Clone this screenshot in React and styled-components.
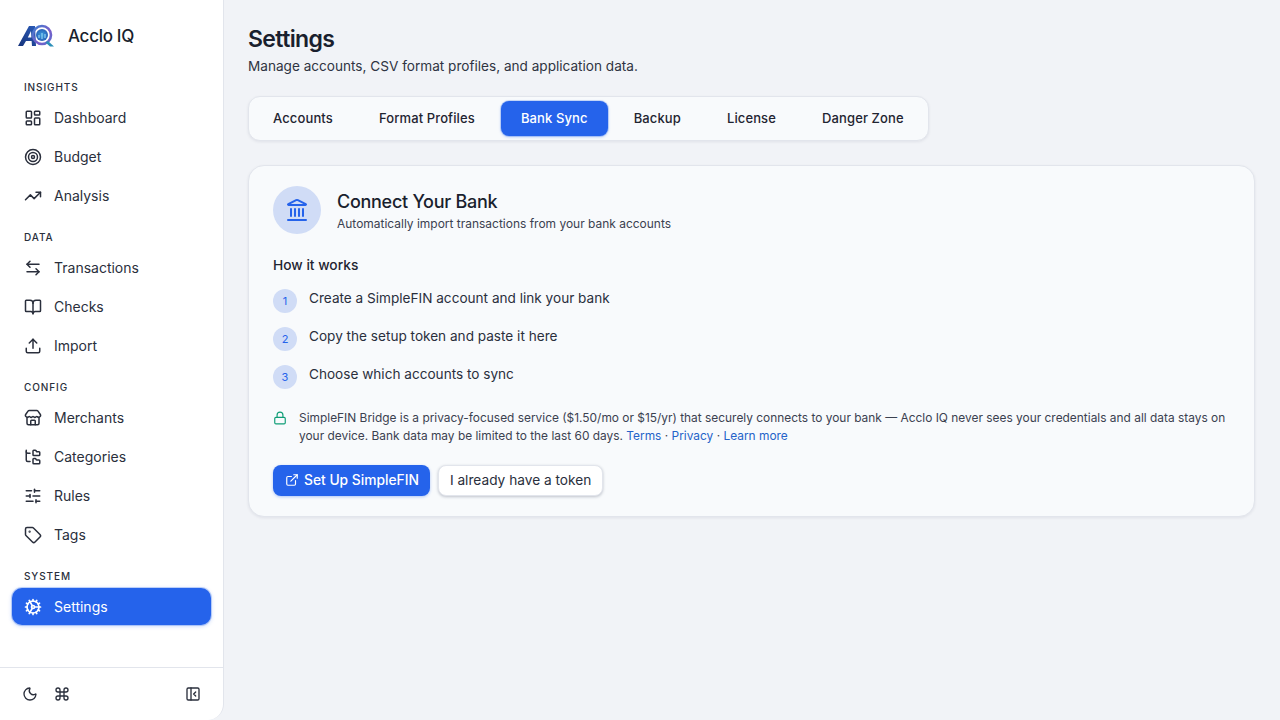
import React from 'react';
import styled, { createGlobalStyle } from 'styled-components';
import {
  LayoutDashboard, Target, TrendingUp, ArrowLeftRight, BookOpen, Upload, Store, FolderTree,
  SlidersHorizontal, Tag, Cog, Moon, Command, PanelLeftClose, Landmark, Lock, ExternalLink,
} from 'lucide-react';

const Global = createGlobalStyle`
  html, body { margin: 0; padding: 0; height: 100%; }
  body { font-family: Inter, "Liberation Sans", sans-serif; background: #f1f3f7; color: #1a1f2e; overflow: hidden; }
  * { box-sizing: border-box; }
`;

const Shell = styled.div`display: flex; width: 1280px; height: 720px; background: #f1f3f7;`;

const Sidebar = styled.aside`
  width: 224px; height: 720px; flex: none; background: #fff;
  border-right: 1px solid #e2e5ec; border-bottom-right-radius: 16px;
  display: flex; flex-direction: column;
`;
const Brand = styled.div`
  height: 72px; padding: 0 0 0 18px; display: flex; align-items: center; gap: 12px;
  font-size: 17px; font-weight: 500; letter-spacing: -0.3px; color: #1a1f2e;
`;
const Nav = styled.nav`flex: 1; padding: 0 12px 0 12px; display: flex; flex-direction: column;`;
const SectionLabel = styled.div`
  padding: 0 12px; height: 14px; line-height: 14px; margin-top: ${p => p.$first ? 8 : 14}px; margin-bottom: 5px;
  font-size: 10px; font-weight: 500; letter-spacing: 0.9px; color: #2a2f3c; text-transform: uppercase;
`;
const NavItem = styled.a`
  height: 37px; margin-bottom: 2px; padding: 0 12px; display: flex; align-items: center; gap: 12px;
  border-radius: 10px; font-size: 14px; font-weight: 400;
  color: ${p => p.$active ? '#fff' : '#2a2f3c'};
  background: ${p => p.$active ? '#2563eb' : 'transparent'};
  box-shadow: ${p => p.$active ? '0 0 0 1px rgba(37,99,235,.25), 0 1px 4px rgba(37,99,235,.3)' : 'none'};
  svg { flex: none; }
`;
const SideFooter = styled.div`
  height: 53px; border-top: 1px solid #e2e5ec; padding: 0 22px 0 22px; display: flex; align-items: center; gap: 16px;
  color: #2a2f3c;
`;
const Spacer = styled.div`flex: 1;`;

const Main = styled.main`flex: 1; padding: 24px 25px 0 24px; min-width: 0;`;
const Title = styled.h1`margin: 0; font-size: 23px; line-height: 31px; font-weight: 600; letter-spacing: -0.6px; color: #1a1f2e;`;
const Subtitle = styled.p`margin: 1px 0 0; font-size: 13.6px; line-height: 20px; color: #2f3442;`;
const Tabs = styled.div`
  margin-top: 20px; display: inline-flex; gap: 6px; padding: 4px; height: 45px; align-items: stretch;
  background: #f8fafc; border: 1px solid #e2e5ec; border-radius: 12px;
  box-shadow: 0 1px 3px rgba(20,30,60,.08);
`;
const Tab = styled.div`
  padding: 0 20px 1px; display: flex; align-items: center; border-radius: 8px;
  font-size: 13px; font-weight: 550; letter-spacing: 0.12px;
  color: ${p => p.$active ? '#fff' : '#1f2431'};
  background: ${p => p.$active ? '#2563eb' : 'transparent'};
  box-shadow: ${p => p.$active ? '0 0 0 1px rgba(37,99,235,.2), 0 1px 3px rgba(37,99,235,.35)' : 'none'};
`;
const Card = styled.section`
  margin-top: 24px; height: 352px; padding: 20px 24px; background: #f8fafc;
  border: 1px solid #e2e5ec; border-radius: 16px; box-shadow: 0 1px 3px rgba(20,30,60,.08);
`;
const CardHead = styled.div`display: flex; align-items: center; gap: 16px;`;
const HeadText = styled.div`padding-top: 3px;`;
const IconCircle = styled.div`
  width: 48px; height: 48px; border-radius: 50%; background: #d0dcf6; color: #2563eb;
  display: flex; align-items: center; justify-content: center;
`;
const CardTitle = styled.h2`margin: 0; font-size: 18px; line-height: 24px; font-weight: 550; letter-spacing: -0.28px; color: #1a1f2e;`;
const CardSub = styled.p`margin: 1px 0 0; font-size: 11.98px; line-height: 18px; color: #3b4150;`;
const Heading = styled.h3`margin: 20px 0 0; font-size: 13.75px; line-height: 22px; font-weight: 450; color: #1f2431;`;
const Steps = styled.ol`margin: 12px 0 0; padding: 0; list-style: none; display: flex; flex-direction: column; gap: 14px;`;
const Step = styled.li`display: flex; gap: 12px; font-size: 13.6px; line-height: 20px; color: #2a2f3c; height: 24px;`;
const Num = styled.span`
  width: 24px; height: 24px; margin-top: 1px; flex: none; border-radius: 50%; background: #d0dcf6; color: #2563eb;
  font-size: 11px; font-weight: 400; display: flex; align-items: center; justify-content: center;
`;
const Notice = styled.div`margin-top: 21px; display: flex; gap: 12px; font-size: 11.92px; line-height: 18px; color: #3b4150;`;
const LockWrap = styled.span`flex: none; color: #0f9d76; width: 14px; height: 18px; display: flex; align-items: center;`;
const Lnk = styled.a`color: #2563c9;`;
const Actions = styled.div`margin-top: 20px; display: flex; gap: 8px;`;
const Primary = styled.button`
  height: 31px; padding: 0 11px 1px 12px; display: flex; align-items: center; gap: 5px; border: none; border-radius: 8px;
  background: #2563eb; color: #fff; font: 450 13.8px Inter, sans-serif;
  box-shadow: 0 1px 3px rgba(37,99,235,.35);
`;
const Secondary = styled.button`
  height: 31px; padding: 0 11px 1px 11px; border: 1px solid #e2e5ec; border-radius: 8px; background: #fff;
  color: #2a2f3c; font: 400 13.7px Inter, sans-serif;
  box-shadow: 0 1px 3px rgba(20,30,60,.25);
`;

const Logo = () => (
  <svg width="38" height="24" viewBox="0 0 38 24">
    <defs>
      <linearGradient id="la" x1="0" y1="1" x2="1" y2="0">
        <stop offset="0" stopColor="#16337a" /><stop offset="1" stopColor="#2a5bb8" />
      </linearGradient>
      <linearGradient id="lr" x1="0" y1="0" x2="1" y2="1">
        <stop offset="0" stopColor="#3f7fd0" /><stop offset="0.6" stopColor="#7a5cc8" /><stop offset="1" stopColor="#5a6fd0" />
      </linearGradient>
      <radialGradient id="lq"><stop offset="0" stopColor="#3aa0e0" /><stop offset="1" stopColor="#2a63b8" /></radialGradient>
    </defs>
    <path d="M0 22 L11 2 H17 L18 22 H14 L13.6 17 H8 L5 22Z M9.8 13.5 H13.4 L13 7Z" fill="url(#la)" />
    <circle cx="24" cy="11" r="9" fill="none" stroke="url(#lr)" strokeWidth="2.6" />
    <circle cx="24" cy="11" r="6" fill="url(#lq)" />
    <path d="M30 17 L36 22.5 H32 L27.5 18.5Z" fill="#2b8fb8" />
    <path d="M21 14 v-3 M24 15 v-6 M27 14 v-4" stroke="#8fd0f0" strokeWidth="1.2" />
  </svg>
);

const sections = [
  ['Insights', [[LayoutDashboard, 'Dashboard'], [Target, 'Budget'], [TrendingUp, 'Analysis']]],
  ['Data', [[ArrowLeftRight, 'Transactions'], [BookOpen, 'Checks'], [Upload, 'Import']]],
  ['Config', [[Store, 'Merchants'], [FolderTree, 'Categories'], [SlidersHorizontal, 'Rules'], [Tag, 'Tags']]],
  ['System', [[Cog, 'Settings', true]]],
];
const tabs = ['Accounts', 'Format Profiles', 'Bank Sync', 'Backup', 'License', 'Danger Zone'];
const steps = ['Create a SimpleFIN account and link your bank', 'Copy the setup token and paste it here', 'Choose which accounts to sync'];

export default function App() {
  return (
    <Shell>
      <Global />
      <Sidebar>
        <Brand><Logo /><span>Acclo IQ</span></Brand>
        <Nav>
          {sections.map(([label, items], i) => (
            <React.Fragment key={label}>
              <SectionLabel $first={i === 0}>{label}</SectionLabel>
              {items.map(([Icon, name, active]) => (
                <NavItem key={name} $active={active}><Icon size={18} strokeWidth={active ? 2.25 : 2} />{name}</NavItem>
              ))}
            </React.Fragment>
          ))}
        </Nav>
        <SideFooter>
          <Moon size={16} strokeWidth={2} />
          <Command size={16} strokeWidth={2} />
          <Spacer />
          <PanelLeftClose size={16} strokeWidth={2} />
        </SideFooter>
      </Sidebar>
      <Main>
        <Title>Settings</Title>
        <Subtitle>Manage accounts, CSV format profiles, and application data.</Subtitle>
        <Tabs>
          {tabs.map(t => <Tab key={t} $active={t === 'Bank Sync'}>{t}</Tab>)}
        </Tabs>
        <Card>
          <CardHead>
            <IconCircle><Landmark size={24} strokeWidth={2} /></IconCircle>
            <HeadText>
              <CardTitle>Connect Your Bank</CardTitle>
              <CardSub>Automatically import transactions from your bank accounts</CardSub>
            </HeadText>
          </CardHead>
          <Heading>How it works</Heading>
          <Steps>
            {steps.map((s, i) => <Step key={s}><Num>{i + 1}</Num><span>{s}</span></Step>)}
          </Steps>
          <Notice>
            <LockWrap><Lock size={14} strokeWidth={2} /></LockWrap>
            <span>
              SimpleFIN Bridge is a privacy-focused service ($1.50/mo or $15/yr) that securely connects to your bank — Acclo IQ never sees your credentials and all data stays on your device. Bank data may be limited to the last 60 days. <Lnk>Terms</Lnk> · <Lnk>Privacy</Lnk> · <Lnk>Learn more</Lnk>
            </span>
          </Notice>
          <Actions>
            <Primary><ExternalLink size={14} strokeWidth={2} />Set Up SimpleFIN</Primary>
            <Secondary>I already have a token</Secondary>
          </Actions>
        </Card>
      </Main>
    </Shell>
  );
}
